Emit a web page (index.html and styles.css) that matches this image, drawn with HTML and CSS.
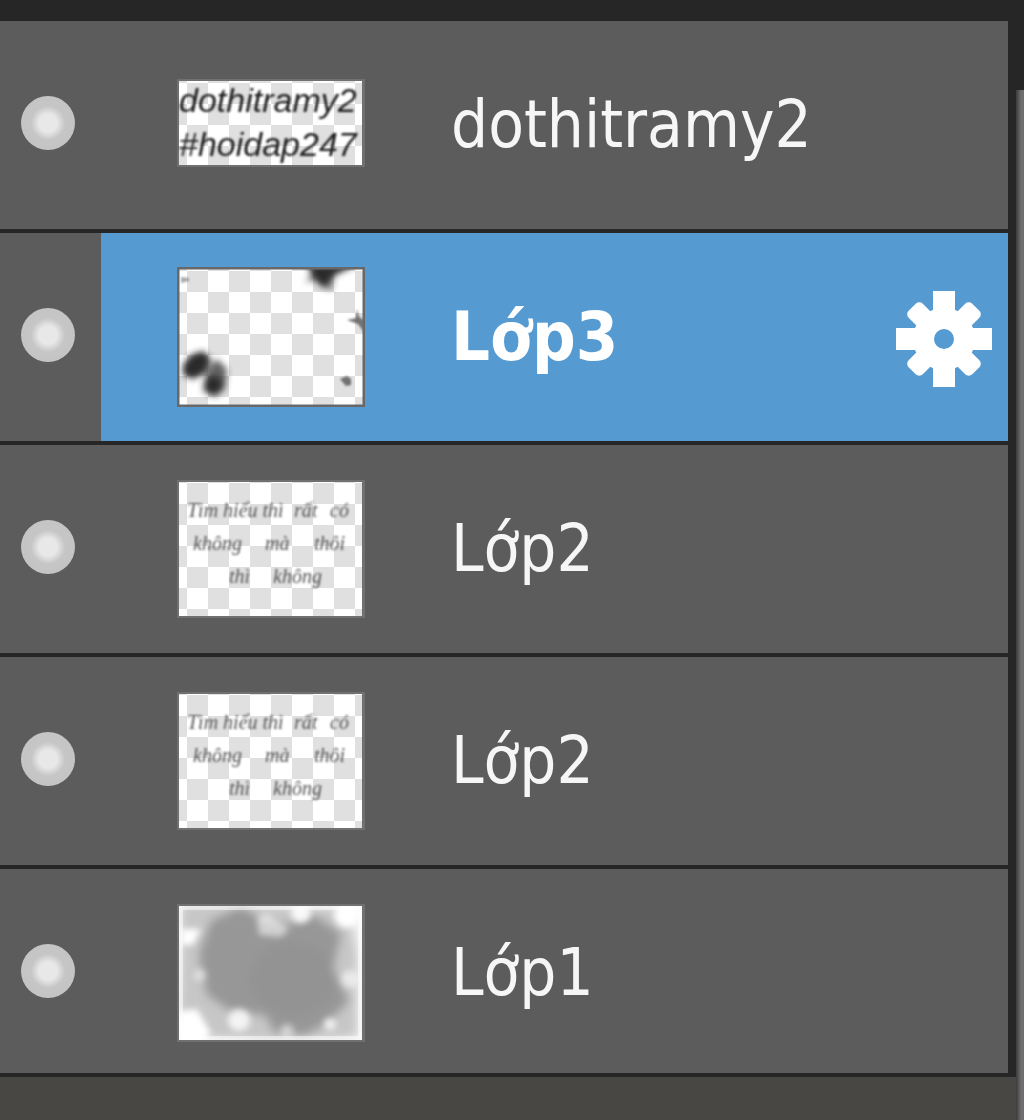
FILE: index.html
```
<!DOCTYPE html>
<html lang="vi">
<head>
  <meta charset="UTF-8" />
  <meta name="viewport" content="width=device-width, initial-scale=1.0" />
  <title>Layers</title>
  <link rel="stylesheet" href="styles.css">
</head>
<body>
  <!-- shared pattern and filters for the thumbnails -->
  <svg class="defs" aria-hidden="true">
    <defs>
      <pattern id="checker" x="10" y="4" width="42" height="42" patternUnits="userSpaceOnUse">
        <rect width="42" height="42" fill="#fff"/>
        <path d="M0 0h21v21H0zM21 21h21v21H21z" fill="#e0e0e0"/>
      </pattern>
      <filter id="soft"><feGaussianBlur stdDeviation="1"/></filter>
      <filter id="smoke" x="-50%" y="-50%" width="200%" height="200%"><feGaussianBlur stdDeviation="3"/></filter>
      <filter id="cloud" x="-50%" y="-50%" width="200%" height="200%"><feGaussianBlur stdDeviation="5"/></filter>
    </defs>
  </svg>

  <div class="panel">
    <main class="layers">
      <ul class="layer-list">
        <li class="layer">
          <div class="visibility"><input type="checkbox" checked aria-label="dothitramy2"></div>
          <div class="layer-body">
            <svg class="thumb" viewBox="0 0 188 92" aria-hidden="true">
              <rect width="188" height="88" fill="#707070"/>
              <rect x="2" y="2" width="183" height="84" fill="url(#checker)"/>
              <g class="note" filter="url(#soft)">
                <text x="2" y="33">dothitramy2</text>
                <text x="2" y="77">#hoidap247</text>
              </g>
            </svg>
            <span class="name">dothitramy2</span>
          </div>
        </li>

        <li class="layer selected">
          <div class="visibility"><input type="checkbox" checked aria-label="Lớp3"></div>
          <div class="layer-body">
            <svg class="thumb" viewBox="0 0 188 140" aria-hidden="true">
              <rect x="1" y="1" width="186" height="138" fill="url(#checker)"/>
              <g filter="url(#smoke)" fill="#2c2c2c">
                <path d="M130 -2h50l-22 10-12 13-8-8z"/>
                <path d="M134 6l-5 10 12-4zM158 6l-4 18-12-8z" opacity=".6"/>
                <path d="M6 98l8-10 12-4 8 8-6 14-12 6-10-4z"/>
                <path d="M28 112l4-12 8-8 10 10-2 20-10 8-12-6z" opacity=".75"/>
                <circle cx="36" cy="118" r="9"/>
              </g>
              <g filter="url(#soft)" fill="#555">
                <path d="M180 42l2 8 5 3v12l-6-8-11-4 9-2z" opacity=".8"/>
                <path d="M163 112l7-3 4 3v6l-5 1z" opacity=".8"/>
                <path d="M4 10l8 1v3l-8 2z" opacity=".5"/>
              </g>
              <rect x="1" y="1" width="186" height="138" fill="none" stroke="#686868" stroke-width="3"/>
            </svg>
            <span class="name">Lớp3</span>
            <button class="settings" type="button" aria-label="Lớp3">
              <svg viewBox="0 0 96 96" aria-hidden="true">
                <g fill="#fff">
                  <rect x="37" y="0" width="22" height="96"/>
                  <rect x="0" y="37" width="96" height="22"/>
                  <rect x="38" y="3" width="20" height="90" rx="5" transform="rotate(45 48 48)"/>
                  <rect x="38" y="3" width="20" height="90" rx="5" transform="rotate(-45 48 48)"/>
                  <circle cx="48" cy="48" r="31"/>
                </g>
                <circle cx="48" cy="48" r="10" fill="#559bd2"/>
              </svg>
            </button>
          </div>
        </li>

        <li class="layer">
          <div class="visibility"><input type="checkbox" checked aria-label="Lớp2"></div>
          <div class="layer-body">
            <svg class="thumb" viewBox="0 0 188 140" aria-hidden="true">
              <rect y="1" width="188" height="138" fill="#707070"/>
              <rect x="2" y="3" width="183" height="134" fill="url(#checker)"/>
              <g class="script" filter="url(#soft)">
                <text x="10" y="38">Tìm hiểu thì</text>
                <text x="117" y="38">rất</text>
                <text x="153" y="38">có</text>
                <text x="16" y="71">không</text>
                <text x="88" y="71">mà</text>
                <text x="137" y="71">thôi</text>
                <text x="52" y="104">thì</text>
                <text x="96" y="104">không</text>
              </g>
            </svg>
            <span class="name">Lớp2</span>
          </div>
        </li>

        <li class="layer">
          <div class="visibility"><input type="checkbox" checked aria-label="Lớp2"></div>
          <div class="layer-body">
            <svg class="thumb" viewBox="0 0 188 140" aria-hidden="true">
              <rect y="1" width="188" height="138" fill="#707070"/>
              <rect x="2" y="3" width="183" height="134" fill="url(#checker)"/>
              <g class="script" filter="url(#soft)">
                <text x="10" y="38">Tìm hiểu thì</text>
                <text x="117" y="38">rất</text>
                <text x="153" y="38">có</text>
                <text x="16" y="71">không</text>
                <text x="88" y="71">mà</text>
                <text x="137" y="71">thôi</text>
                <text x="52" y="104">thì</text>
                <text x="96" y="104">không</text>
              </g>
            </svg>
            <span class="name">Lớp2</span>
          </div>
        </li>

        <li class="layer">
          <div class="visibility"><input type="checkbox" checked aria-label="Lớp1"></div>
          <div class="layer-body">
            <svg class="thumb" viewBox="0 0 188 140" aria-hidden="true">
              <rect y="1" width="188" height="138" fill="#707070"/>
              <rect x="2" y="3" width="183" height="134" fill="#f4f4f4"/>
              <svg x="2" y="3" width="183" height="134" viewBox="2 3 183 134">
                <g filter="url(#cloud)">
                  <path d="M4 2L60 0 112 4 172 6 180 50 180 134 150 136 96 138 24 134 2 110 4 60z" fill="#999" opacity=".5"/>
                  <path d="M34 18L64 4 88 18 110 22 136 12 164 30 156 66 172 98 150 120 128 132 98 130 88 112 54 108 30 92 22 52z" fill="#979797"/>
                  <ellipse cx="62" cy="54" rx="38" ry="38" fill="#979797"/>
                  <ellipse cx="116" cy="76" rx="42" ry="36" fill="#939393"/>
                </g>
                <g filter="url(#smoke)" fill="#fff">
                  <path d="M80 14l8-4 10 6 14 10-8 8-22-2z" opacity=".55"/>
                  <circle cx="124" cy="10" r="10" opacity=".9"/>
                  <circle cx="170" cy="12" r="13"/>
                  <path d="M4 26h20l-8 16H4z"/>
                  <path d="M2 108l18-2 14 24-8 10H2z"/>
                  <circle cx="62" cy="117" r="11" opacity=".8"/>
                  <circle cx="110" cy="128" r="7" opacity=".5"/>
                  <circle cx="153" cy="121" r="6" opacity=".8"/>
                  <circle cx="23" cy="72" r="6" opacity=".5"/>
                  <circle cx="173" cy="76" r="9" opacity=".6"/>
                </g>
              </svg>
              <rect x="4" y="5" width="179" height="130" fill="none" stroke="#fff" stroke-width="4" opacity=".5"/>
            </svg>
            <span class="name">Lớp1</span>
          </div>
        </li>
      </ul>
    </main>
    <div class="scrollbar"></div>
  </div>
</body>
</html>
```
FILE: styles.css
```
:root {
  --dark:#262626;
  --row:#5c5c5c;
  --blue:#559bd2;
  --empty:#484744;
}
*{box-sizing:border-box;margin:0;padding:0}
body{font-family:"DejaVu Sans Condensed","DejaVu Sans",sans-serif;font-stretch:condensed;background:var(--dark);color:#f6f6f6}
.defs{position:absolute;width:0;height:0}

.panel{display:flex;min-height:100vh}
.layers{flex:1;min-width:0;background:var(--empty)}
.layer-list{list-style:none;border-top:21px solid var(--dark);border-right:8px solid var(--dark)}

.layer{display:flex;min-height:212px;background:var(--row);border-bottom:4px solid var(--dark)}
.layer:last-child{min-height:208px}
.layer:last-child .layer-body{padding-top:4px}
.visibility{flex:none;width:101px;padding:75px 0 0 21px}
.visibility input{
  display:block;appearance:none;width:54px;height:54px;border-radius:50%;cursor:pointer;
  background:radial-gradient(circle,#e8e8e8 9px,#c6c6c6 17px,#c2c2c2 100%)}
.visibility input:not(:checked){opacity:.2}

.layer-body{flex:1;min-width:0;display:flex;align-items:center;padding:0 16px 0 76px}
.selected .layer-body{background:var(--blue)}
.thumb{flex:none;display:block;width:188px}
.name{flex:1;min-width:0;margin-left:86px;font-size:65px;line-height:80px}
.selected .name{font-size:68px;font-weight:bold;color:#fff}
.settings{flex:none;width:96px;height:96px;margin-top:4px;border:none;background:none;cursor:pointer}
.settings svg{display:block;width:96px;height:96px}

.note{font:italic 34px "Liberation Sans",sans-serif;fill:#222}
.script{font:italic 20px "Liberation Serif",serif;fill:#555}

.scrollbar{flex:none;width:8px;margin-top:90px;background:linear-gradient(90deg,#3a3a3a,#6e6e6e 5px)}
```
